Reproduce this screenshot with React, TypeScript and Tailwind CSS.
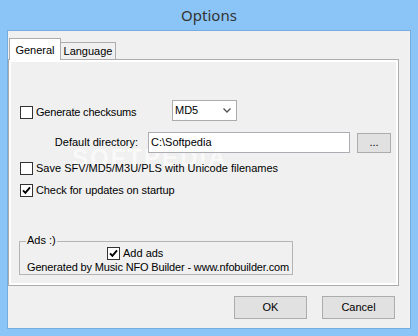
import React from "react";

function Box({ checked }: { checked?: boolean }) {
  return (
    <span className="w-[13px] h-[13px] border border-[#333333] bg-white flex items-center justify-center shrink-0">
      {checked && (
        <svg width="9" height="9" viewBox="0 0 9 9">
          <path d="M1 4.3 L3.4 6.8 L8 1.3" stroke="#000" strokeWidth="1.9" fill="none" />
        </svg>
      )}
    </span>
  );
}

export default function App() {
  return (
    <div className="w-[418px] h-[336px] bg-[#8bc5f7] flex flex-col font-['Liberation_Sans',Arial,sans-serif] text-[11px] leading-[13px] text-black whitespace-nowrap">
      <div className="h-[30px] pt-[1px] flex items-center justify-center text-[15px] text-[#333333] font-['Noto_Sans',sans-serif]">
        Options
      </div>
      <div className="ml-[7px] w-[404px] h-[299px] border border-[#76ace0] bg-[#f0f0f0] flex flex-col">
        {/* tabs */}
        <div className="flex items-end h-[28px] pl-[1px]">
          <div className="relative z-10 -mb-[1px] w-[52px] h-[22px] bg-white border border-b-0 border-[#adadad] flex justify-center pt-[5px]">
            General
          </div>
          <div className="-ml-[1px] w-[56px] h-[17px] bg-[#f0f0f0] border border-b-0 border-[#adadad] flex justify-center pt-[2px]">
            Language
          </div>
        </div>
        {/* panel */}
        <div className="w-[391px] h-[227px] border border-[#adadad] bg-white p-[2px] flex">
          <div className="relative flex-1 bg-[#f0f0f0] flex flex-col pt-[38px]">
            <div className="pointer-events-none absolute left-[61px] top-[84px] text-[24px] leading-[24px] font-bold tracking-[2px] text-white opacity-60">
              SOFTPEDIA
            </div>
            {/* row 1 */}
            <div className="relative flex items-start h-[21px]">
              <div className="w-[161px] pl-[9px] mt-[6px] flex items-center gap-[3px]">
                <Box />
                <span className="tracking-[-0.2px]">Generate checksums</span>
              </div>
              <div className="w-[65px] h-[21px] border border-[#acacac] bg-white flex items-center justify-between pl-[2px] pr-[5px]">
                <span>MD5</span>
                <svg width="8" height="5" viewBox="0 0 8 5">
                  <path d="M0.5 0.5 L4 4 L7.5 0.5" stroke="#555" strokeWidth="1.4" fill="none" />
                </svg>
              </div>
            </div>
            {/* row 2 */}
            <div className="relative flex items-start h-[21px] mt-[11px]">
              <div className="w-[127px] h-[21px] flex items-center justify-end">Default directory:</div>
              <div className="ml-[10px] w-[202px] h-[21px] border border-[#abadb3] bg-white flex items-center pl-[2px]">
                C:\Softpedia
              </div>
              <div className="ml-[7px] mt-[1px] w-[34px] h-[20px] border border-[#acacac] bg-[#e1e1e1] flex items-center justify-center pb-[2px]">
                ...
              </div>
            </div>
            {/* row 3 */}
            <div className="relative flex items-center gap-[3px] pl-[9px] h-[13px] mt-[9px]">
              <Box />
              <span>Save SFV/MD5/M3U/PLS with Unicode filenames</span>
            </div>
            {/* row 4 */}
            <div className="relative flex items-center gap-[3px] pl-[9px] h-[13px] mt-[9px]">
              <Box checked />
              <span className="tracking-[-0.1px]">Check for updates on startup</span>
            </div>
            {/* group box */}
            <div className="relative ml-[8px] mt-[44px] w-[274px] h-[34px] border border-[#b4b4b4] flex flex-col">
              <span className="absolute left-[6px] -top-[8px] px-[1px] bg-[#f0f0f0]">Ads :)</span>
              <div className="flex items-center gap-[3px] pl-[87px] mt-[5px] h-[13px]">
                <Box checked />
                <span>Add ads</span>
              </div>
              <div className="pl-[7px] mt-[1px] h-[13px] tracking-[-0.15px]">
                Generated by Music NFO Builder - www.nfobuilder.com
              </div>
            </div>
          </div>
        </div>
        {/* buttons */}
        <div className="flex justify-end gap-[15px] pr-[15px] mt-[10px]">
          <div className="w-[73px] h-[23px] border border-[#acacac] bg-[#e1e1e1] flex items-center justify-center">
            OK
          </div>
          <div className="w-[73px] h-[23px] border border-[#acacac] bg-[#e1e1e1] flex items-center justify-center">
            Cancel
          </div>
        </div>
      </div>
    </div>
  );
}
